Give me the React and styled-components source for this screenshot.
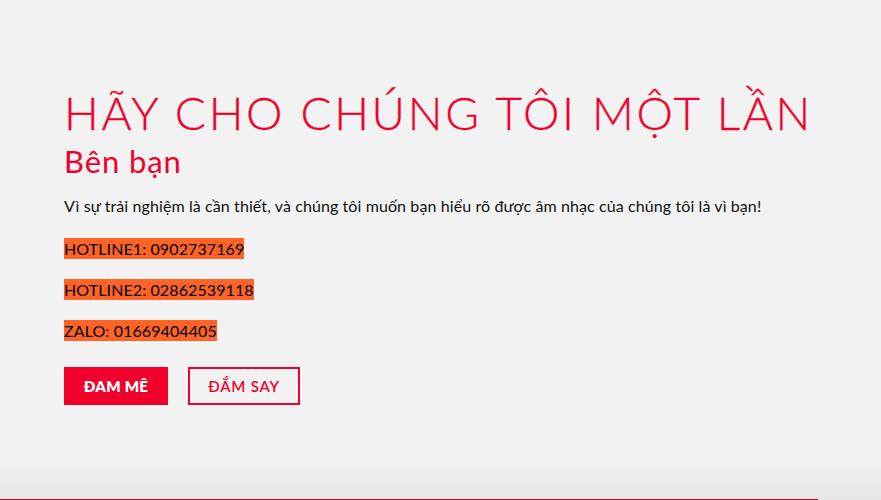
import styled, { createGlobalStyle } from 'styled-components';

const GlobalStyle = createGlobalStyle`
  html, body {
    margin: 0;
    padding: 0;
    background: #f2f2f2;
  }
  body {
    font-family: Lato, "Noto Sans", sans-serif;
  }
`;

const Section = styled.section`
  position: relative;
  height: 500px;
  box-sizing: border-box;
  padding: 86px 64px 0;
  background: linear-gradient(to bottom, #f2f2f2 0%, #f2f2f2 93%, #e6e6e6 100%);
  overflow: hidden;
`;

const BottomEdge = styled.div`
  position: absolute;
  left: 0;
  bottom: 0;
  width: 818px;
  height: 1px;
  background: #d0021b;
`;

const Title = styled.h1`
  margin: 0;
  font-size: 46px;
  font-weight: 300;
  letter-spacing: 2.7px;
  line-height: 54px;
  color: #f0002a;
  white-space: nowrap;
  -webkit-text-stroke: 0.3px #f0002a;
`;

const Subtitle = styled.h2`
  margin: 2px 0 0;
  font-size: 31px;
  font-weight: 400;
  letter-spacing: 0.9px;
  line-height: 38px;
  color: #f0002a;
`;

const Lead = styled.p`
  margin: 16px 0 0;
  font-size: 16px;
  letter-spacing: 0.1px;
  line-height: 20px;
  color: #111;
`;

const Contacts = styled.div`
  display: flex;
  flex-direction: column;
  align-items: flex-start;
  gap: 20px;
  margin-top: 22px;
`;

const Highlight = styled.span`
  display: inline-block;
  background: #ff6325;
  color: #000;
  font-size: 16px;
  letter-spacing: 0.1px;
  line-height: 21px;
`;

const Actions = styled.div`
  display: flex;
  gap: 20px;
  margin-top: 26px;
`;

const Button = styled.a`
  display: inline-flex;
  align-items: center;
  justify-content: center;
  box-sizing: border-box;
  height: 38px;
  font-size: 15px;
  font-weight: ${(p) => (p.$outline ? 600 : 800)};
  letter-spacing: ${(p) => (p.$outline ? '0.8px' : '0.3px')};
  text-decoration: none;
  color: ${(p) => (p.$outline ? '#f0002a' : '#fff')};
  background: ${(p) => (p.$outline ? 'transparent' : '#f0002a')};
  border: 2px solid #f0002a;
  width: ${(p) => (p.$outline ? '112px' : '104px')};
`;

export default function App() {
  return (
    <>
      <GlobalStyle />
      <Section>
        <Title>HÃY CHO CHÚNG TÔI MỘT LẦN</Title>
        <Subtitle>Bên bạn</Subtitle>
        <Lead>
          Vì sự trải nghiệm là cần thiết, và chúng tôi muốn bạn hiểu rõ được âm nhạc của chúng tôi là vì bạn!
        </Lead>
        <Contacts>
          <Highlight>HOTLINE1: 0902737169</Highlight>
          <Highlight>HOTLINE2: 02862539118</Highlight>
          <Highlight>ZALO: 01669404405</Highlight>
        </Contacts>
        <Actions>
          <Button href="#">ĐAM MÊ</Button>
          <Button href="#" $outline>ĐẮM SAY</Button>
        </Actions>
        <BottomEdge />
      </Section>
    </>
  );
}
